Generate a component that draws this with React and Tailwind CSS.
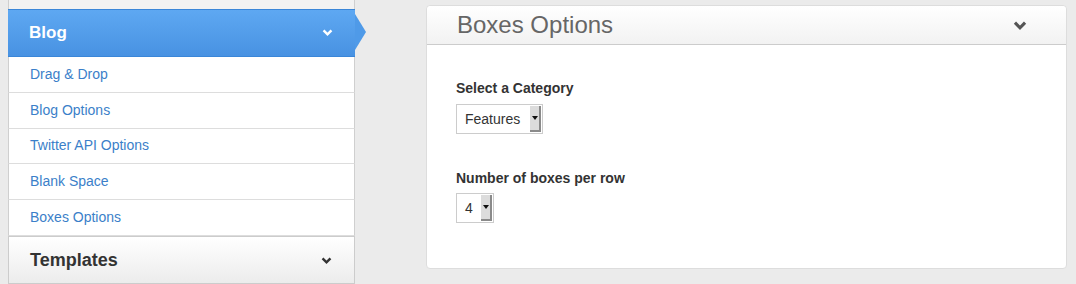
import React from "react";

const items = ["Drag & Drop", "Blog Options", "Twitter API Options", "Blank Space", "Boxes Options"];

function Chevron({ className, w = 11, h = 7 }) {
  return (
    <svg width={w} height={h} viewBox="0 0 12 8" className={className} fill="none">
      <polyline points="1.5,1.5 6,6 10.5,1.5" stroke="currentColor" strokeWidth="2.8" strokeLinejoin="miter" />
    </svg>
  );
}

function FakeSelect({ value, width }) {
  return (
    <div className={`flex h-[30px] border border-[#cccccc] bg-white ${width}`}>
      <div className="flex flex-1 items-center pl-[8px] text-[14px] text-[#333]">{value}</div>
      <div className="my-[1px] mr-[1px] flex w-[11px] items-center justify-center border-r-2 border-b-2 border-r-[#8a8a8a] border-b-[#8a8a8a] bg-[#dcdcdc]">
        <div className="h-0 w-0 border-x-[3px] border-t-[4px] border-x-transparent border-t-[#111]" />
      </div>
    </div>
  );
}

function Sidebar() {
  return (
    <div className="ml-[8px] flex w-[347px] flex-col">
      <div className="h-[9px] border-x border-[#cfcfcf] bg-[#f2f2f2]" />
      <div className="relative flex h-[48px] items-center justify-between border-y border-[#3a86d8] bg-gradient-to-b from-[#5ea8f2] to-[#4892e2] pl-[21px] pr-[22px]">
        <span className="text-[17px] font-bold text-white">Blog</span>
        <Chevron className="text-white" />
        <div className="absolute right-[-11px] top-[4px] h-0 w-0 border-y-[18px] border-l-[11px] border-y-transparent border-l-[#4f9ae8]" />
      </div>
      {items.map((item) => (
        <div
          key={item}
          className="flex h-[36px] items-center border-x border-b border-x-[#cfcfcf] border-b-[#dddddd] bg-white pl-[21px] text-[14px] text-[#3b7fc9]"
        >
          {item}
        </div>
      ))}
      <div className="flex h-[48px] items-center justify-between border-x border-y border-[#cccccc] bg-gradient-to-b from-[#ffffff] to-[#ececec] pl-[21px] pr-[22px]">
        <span className="text-[18px] font-bold text-[#333]">Templates</span>
        <Chevron className="text-[#333]" />
      </div>
    </div>
  );
}

export default function App() {
  return (
    <div
      className="flex h-[284px] w-[1076px] overflow-hidden bg-[#ebebeb]"
      style={{ fontFamily: '"Liberation Sans", Arial, sans-serif' }}
    >
      <Sidebar />
      <div className="ml-[71px] mt-[5px] flex h-[264px] w-[641px] flex-col rounded-[4px] border border-[#dddddd] bg-white">
        <div className="flex h-[39px] items-center justify-between rounded-t-[4px] border-b border-[#cccccc] bg-gradient-to-b from-[#ffffff] to-[#f2f2f2] pl-[30px] pr-[39px]">
          <span className="text-[24px] text-[#666]">Boxes Options</span>
          <Chevron className="text-[#555]" w={14} h={9} />
        </div>
        <div className="flex flex-col pl-[29px] pt-[33px]">
          <label className="text-[14px] leading-[20px] font-bold text-[#333]">Select a Category</label>
          <div className="mt-[6px]">
            <FakeSelect value="Features" width="w-[87px]" />
          </div>
          <label className="mt-[34px] text-[14px] leading-[20px] font-bold text-[#333]">Number of boxes per row</label>
          <div className="mt-[5px]">
            <FakeSelect value="4" width="w-[38px]" />
          </div>
        </div>
      </div>
    </div>
  );
}
